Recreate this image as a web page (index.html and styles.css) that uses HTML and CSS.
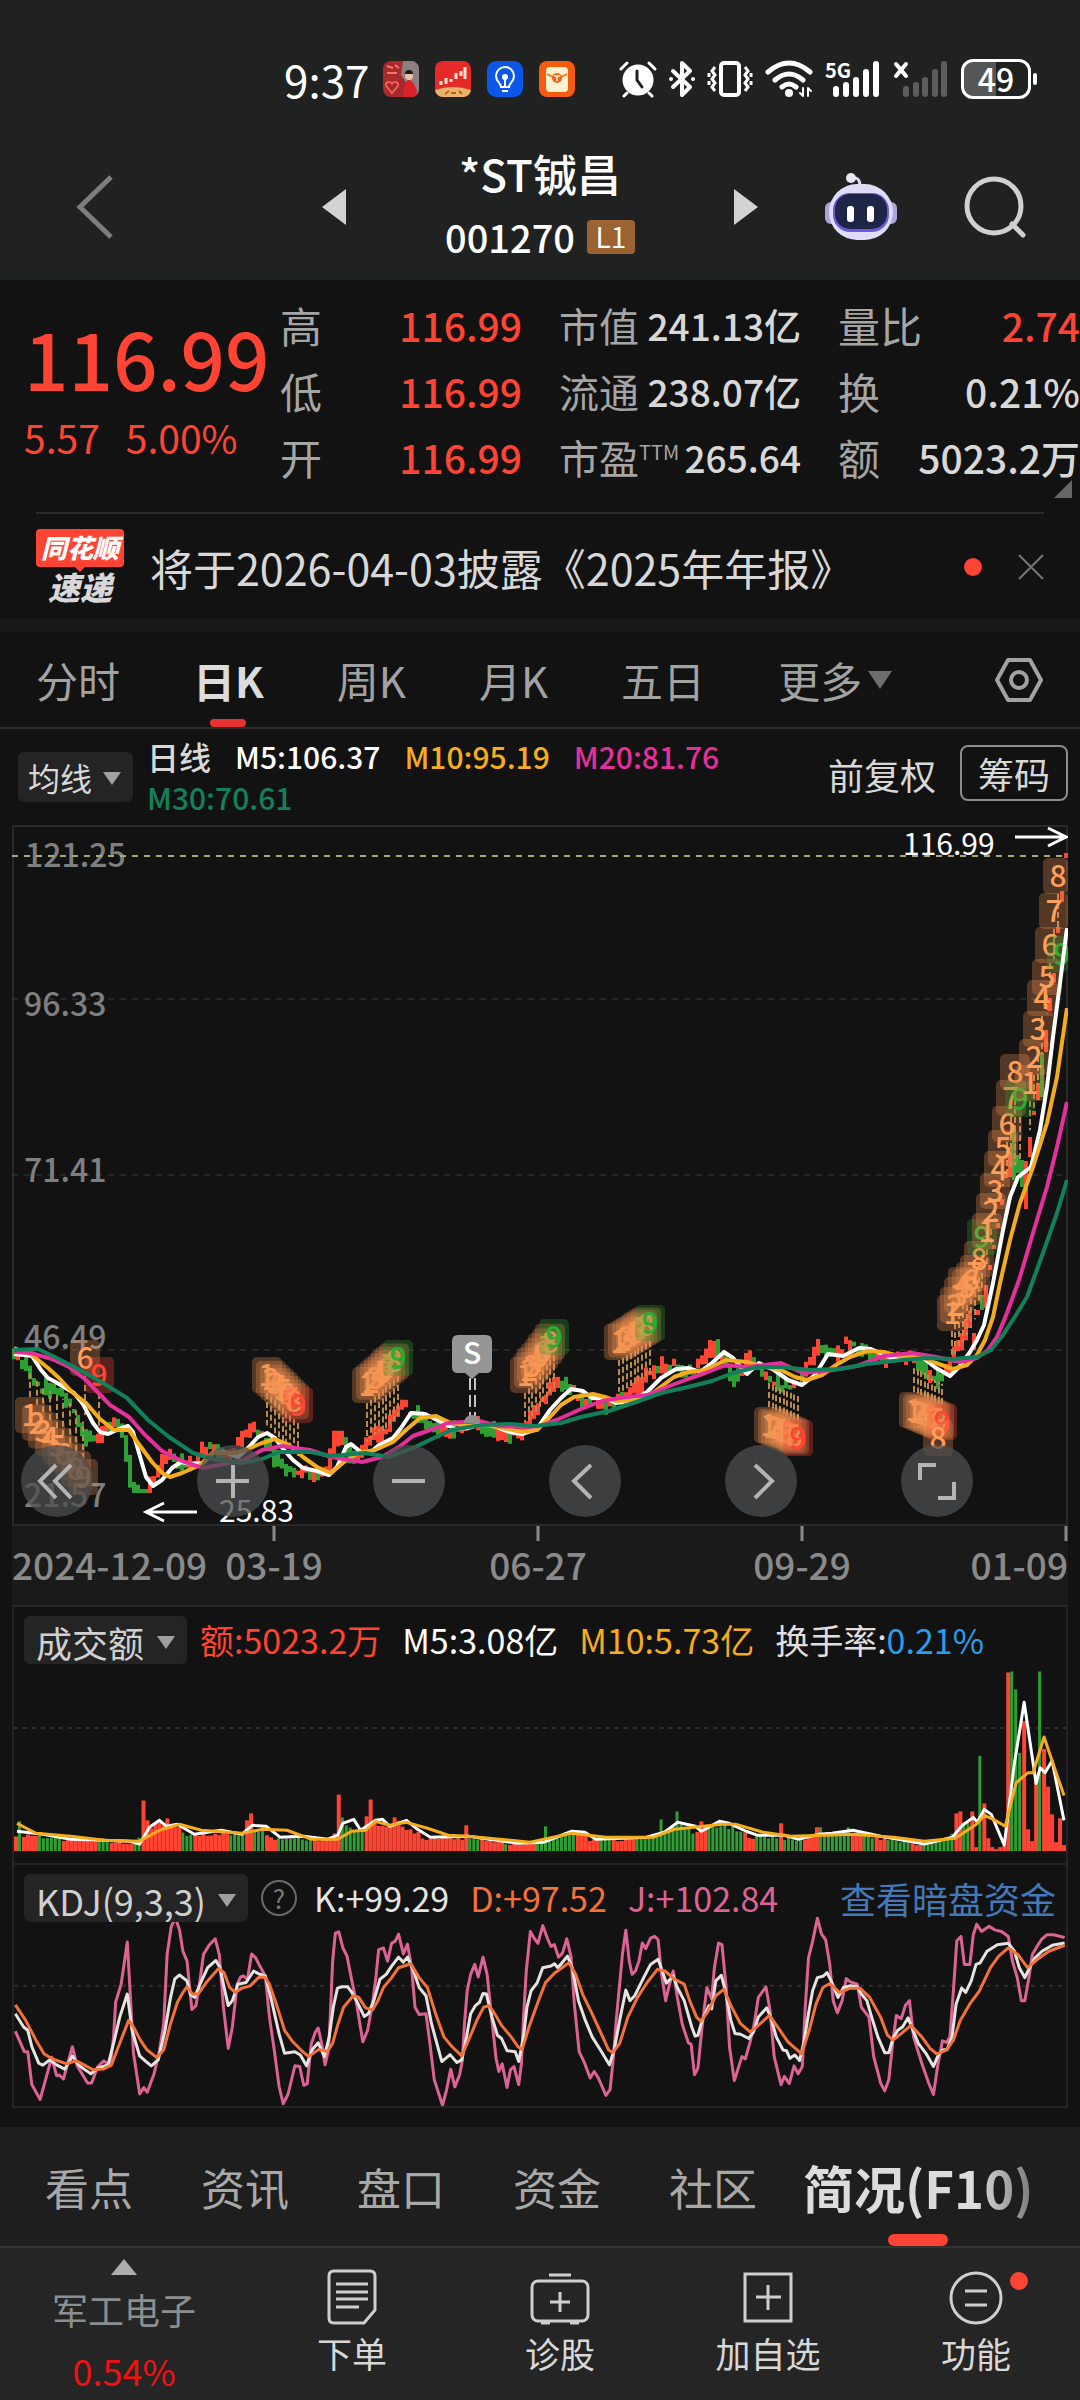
FILE: index.html
```html
<!DOCTYPE html>
<html lang="zh-CN">

<head>
    <meta charset="UTF-8">
    <meta name="viewport" content="width=device-width, initial-scale=1.0">
    <title>*ST铖昌 001270</title>
    <link rel="stylesheet" href="styles.css">
</head>

<body>
    <div class="status-bar">
        <span class="clock">9:37</span>
        <div class="app-icons">
            <svg width="36" height="36" viewBox="0 0 36 36">
                <rect width="36" height="36" rx="8" fill="#a8282c" />
                <path d="M20 0h8a8 8 0 0 1 8 8v20a8 8 0 0 1-4 7L18 14z" fill="#8d7f80" />
                <path d="M4 5l6 2M12 4l4 3M4 12h10" stroke="#f07a6a" stroke-width="2" />
                <path d="M9 32l-6-7c-1-4 4-6 6-2 2-4 7-2 6 2z" fill="none" stroke="#ff6a60" stroke-width="1.5" />
                <circle cx="26" cy="15" r="4" fill="#e9c2ae" />
                <path d="M22 13a4 4 0 0 1 8 0z" fill="#191919" />
                <path d="M20 36c0-10 3-17 6-17s8 7 8 14l-3 3z" fill="#d92128" />
            </svg>
            <svg width="36" height="36" viewBox="0 0 36 36">
                <rect width="36" height="36" rx="8" fill="#e62a27" />
                <path d="M0 29q18-6 36 0a8 8 0 0 1-8 7H8a8 8 0 0 1-8-7z" fill="#e9b469" />
                <path d="M6 20v4M11 17v6M16 18v3M21 12v6M26 10v5M30 6v12" stroke="#ffe3cf" stroke-width="3" />
                <path d="M10 33l4-3M16 32h5M24 30l3 3" stroke="#b95f1e" stroke-width="2" />
            </svg>
            <svg width="36" height="36" viewBox="0 0 36 36" fill="none" stroke="#fff" stroke-width="2">
                <rect width="36" height="36" rx="9" fill="#0d57e8" stroke="none" />
                <path d="M14 26c0-4-5-5-5-11a9 9 0 0 1 18 0c0 6-5 7-5 11z" />
                <path d="M15 30h6M18 26v-8" />
                <circle cx="18" cy="16" r="2" fill="#fff" />
            </svg>
            <svg width="36" height="36" viewBox="0 0 36 36">
                <rect width="36" height="36" rx="8" fill="#f55c0f" />
                <rect x="7" y="6" width="22" height="25" rx="4" fill="#fff0cf" />
                <path d="M8 13q10 7 20 0" fill="none" stroke="#f07a25" stroke-width="2" />
                <circle cx="18" cy="17" r="5" fill="#f0641a" />
                <path d="M15 15h6M18 15v5" stroke="#fff0cf" stroke-width="1.5" />
            </svg>
        </div>
        <div class="system-icons">
            <svg width="38" height="38" viewBox="0 0 38 38" fill="none" stroke="#fff" stroke-width="3" stroke-linecap="round">
                <circle cx="19" cy="20" r="14" fill="#fff" />
                <path d="M2 9l6-6M36 9l-6-6M8 33l-3 3M30 33l3 3" />
                <path d="M18 11v9l5 7" stroke="#1f2221" />
            </svg>
            <svg width="26" height="38" viewBox="0 0 26 38" fill="none" stroke="#fff" stroke-width="4" stroke-linejoin="round">
                <path d="M4 11l17 16-8 8V3l8 8L4 27" stroke-linecap="round" />
                <circle cx="2" cy="19" r="2" fill="#fff" stroke="none" />
                <circle cx="24" cy="19" r="2" fill="#fff" stroke="none" />
            </svg>
            <svg width="46" height="38" viewBox="0 0 46 38" fill="none" stroke="#fff" stroke-width="3">
                <rect x="14" y="3" width="18" height="32" rx="3" stroke-width="4" />
                <path d="M8 7l-3 4 3 4-3 4 3 4-3 4 3 4M38 7l3 4-3 4 3 4-3 4 3 4-3 4M2 13v4M2 21v4M44 13v4M44 21v4" />
            </svg>
            <svg width="48" height="38" viewBox="0 0 48 38" fill="none" stroke="#fff" stroke-width="5" stroke-linecap="round">
                <path d="M3 12q21-18 42 0M10 20q14-12 28 0M17 27q7-6 14 0" />
                <circle cx="24" cy="33" r="4" fill="#fff" stroke="none" />
                <path d="M38 28v8M43 28v8M35 33l3 3M46 31l-3-3" stroke-width="2" />
            </svg>
            <svg class="signal" width="56" height="38" viewBox="0 0 56 38">
                <text x="0" y="18">5G</text>
                <path d="M11 29v5M21 25v9M31 20v14M41 12v22M51 4v30" stroke="#fff" stroke-width="6" stroke-linecap="round" />
            </svg>
            <svg width="56" height="38" viewBox="0 0 56 38" stroke-linecap="round">
                <path d="M3 4l10 12M13 4L3 16" stroke="#fff" stroke-width="4" />
                <path d="M13 29v5M23 25v9M32 20v14M42 12v22M51 4v30" stroke="#5c5e5e" stroke-width="6" />
            </svg>
            <span class="battery">49</span>
        </div>
    </div>

    <header class="top-bar">
        <button class="icon-btn back" aria-label="返回">
            <svg width="40" height="66" viewBox="0 0 40 66" fill="none" stroke="#7c7e7e" stroke-width="5">
                <path d="M36 3L5 33l31 30" />
            </svg>
        </button>
        <div class="stock-switch">
            <button class="icon-btn" aria-label="上一只">
                <svg width="24" height="36" viewBox="0 0 24 36"><path d="M24 0v36L0 18z" fill="#d2d4d3" /></svg>
            </button>
            <div class="stock-title">
                <h1>*ST铖昌</h1>
                <p>001270 <span class="level">L1</span></p>
            </div>
            <button class="icon-btn" aria-label="下一只">
                <svg width="24" height="36" viewBox="0 0 24 36"><path d="M0 0v36l24-18z" fill="#d2d4d3" /></svg>
            </button>
        </div>
        <div class="top-actions">
            <button class="icon-btn" aria-label="智能助手">
                <svg width="74" height="68" viewBox="0 0 74 68">
                    <path d="M27 5q9-2 9 8" fill="none" stroke="#dcdcf0" stroke-width="3" />
                    <circle cx="27" cy="5" r="5" fill="#e8e8f4" />
                    <rect x="1" y="29" width="12" height="22" rx="6" fill="#aaa6dc" />
                    <rect x="61" y="29" width="12" height="22" rx="6" fill="#aaa6dc" />
                    <rect x="5" y="11" width="64" height="56" rx="28" fill="#dedcf7" />
                    <rect x="9" y="20" width="56" height="39" rx="17" fill="#6a5bd8" />
                    <rect x="11" y="21" width="52" height="35" rx="15" fill="#1f2547" />
                    <rect x="23" y="33" width="7" height="16" rx="3" fill="#fff" />
                    <rect x="43" y="33" width="7" height="16" rx="3" fill="#fff" />
                </svg>
            </button>
            <button class="icon-btn" aria-label="搜索">
                <svg width="62" height="62" viewBox="0 0 62 62" fill="none" stroke="#cfd1d0" stroke-width="5">
                    <circle cx="30" cy="30" r="27" />
                    <path d="M48 48l11 11" stroke-linecap="round" />
                </svg>
            </button>
        </div>
    </header>

    <main>
        <section class="quote">
            <div class="price-block">
                <p class="price">116.99</p>
                <p class="change"><span>5.57</span><span>5.00%</span></p>
            </div>
            <dl class="stats wide">
                <div><dt>高</dt><dd class="up">116.99</dd></div>
                <div><dt>低</dt><dd class="up">116.99</dd></div>
                <div><dt>开</dt><dd class="up">116.99</dd></div>
            </dl>
            <dl class="stats">
                <div><dt>市值</dt><dd>241.13亿</dd></div>
                <div><dt>流通</dt><dd>238.07亿</dd></div>
                <div><dt>市盈<sup>TTM</sup></dt><dd>265.64</dd></div>
            </dl>
            <dl class="stats wide">
                <div><dt>量比</dt><dd class="up">2.74</dd></div>
                <div><dt>换</dt><dd>0.21%</dd></div>
                <div><dt>额</dt><dd>5023.2万</dd></div>
            </dl>
        </section>

        <section class="news">
            <div class="news-logo"><span class="brand">同花顺</span><span class="sub">速递</span></div>
            <a href="#">将于2026-04-03披露《2025年年报》</a>
            <span class="dot"></span>
            <button class="icon-btn" aria-label="关闭">
                <svg width="26" height="26" viewBox="0 0 26 26" stroke="#777" stroke-width="2"><path d="M1 1l24 24M25 1L1 25" /></svg>
            </button>
        </section>

        <nav class="period-tabs">
            <button>分时</button>
            <button class="active">日K</button>
            <button>周K</button>
            <button>月K</button>
            <button>五日</button>
            <button class="more">更多</button>
            <button class="settings" aria-label="设置">
                <svg width="50" height="46" viewBox="0 0 50 46" fill="none" stroke="#a2a2a2" stroke-width="4" stroke-linejoin="round">
                    <path d="M14 3h22l11 20-11 20H14L3 23z" />
                    <circle cx="25" cy="23" r="8" />
                </svg>
            </button>
        </nav>

        <div class="ma-bar">
            <label class="picker">
                <select aria-label="主图指标"><option>均线</option></select>
            </label>
            <p class="ma-legend">
                <span class="label">日线</span>
                <span>M5:106.37</span>
                <span class="m10">M10:95.19</span>
                <span class="m20">M20:81.76</span>
                <span class="m30">M30:70.61</span>
            </p>
            <button class="adjust">前复权</button>
            <button class="chips">筹码</button>
        </div>

        <section class="price-chart">
            <svg id="priceChart" viewBox="0 0 1056 780">
                <rect x="0" y="700" width="1056" height="80" fill="#1b1a1a" />
                <g fill="none" stroke="#292929" stroke-width="2">
                    <path d="M1 700V1H1055V700" />
                    <path d="M0 700H1056" />
                    <path d="M0 174H1056M0 350H1056M0 525H1056" stroke-dasharray="6 6" stroke-width="1" stroke="#3a3a3a" />
                </g>
                <g class="y-labels">
                    <text x="13" y="42">121.25</text>
                    <text x="12" y="191">96.33</text>
                    <text x="12" y="357">71.41</text>
                    <text x="12" y="524">46.49</text>
                    <text x="12" y="682">21.57</text>
                </g>
                <path d="M0 31H1056" stroke="#a9a877" stroke-width="2" stroke-dasharray="6 6" />
                <g id="candles"></g>
                <g id="tails" stroke="#b98a50" stroke-width="2" stroke-dasharray="6 3"></g>
                <g id="markers" class="markers"></g>
                <g id="maLines" fill="none" stroke-width="4" stroke-linejoin="round"></g>
                <g class="sell-mark">
                    <path d="M458 553V592M463 553V592" stroke="#c4c4c4" stroke-width="2" stroke-dasharray="12 5" />
                    <path d="M452 598a8 8 0 0 1 16 0z" fill="#8d8d8d" />
                    <path d="M446 510h28q6 0 6 6v26q0 6-6 6h-7l-7 6-7-6h-7q-6 0-6-6v-26q0-6 6-6z" fill="#969696" />
                    <text x="460" y="539">S</text>
                </g>
                <g class="extremes">
                    <text x="891" y="30">116.99</text>
                    <path d="M1003 12h50M1036 3l18 9-18 9" />
                    <text x="207" y="697">25.83</text>
                    <path d="M185 687h-50M152 678l-18 9 18 9" />
                </g>
                <path d="M262 701v15M526 701v15M790 701v15M1054 701v15" stroke="#8a8a8a" stroke-width="3" />
                <g class="x-labels">
                    <text x="0" y="755">2024-12-09</text>
                    <text x="262" y="755" text-anchor="middle">03-19</text>
                    <text x="526" y="755" text-anchor="middle">06-27</text>
                    <text x="790" y="755" text-anchor="middle">09-29</text>
                    <text x="1056" y="755" text-anchor="end">01-09</text>
                </g>
            </svg>
            <div class="chart-tools">
                <button aria-label="最早"><svg viewBox="0 0 72 72"><path d="M35 20L19 36l16 17M50 20L34 36l16 17" /></svg></button>
                <button aria-label="放大"><svg viewBox="0 0 72 72"><path d="M36 20v33M19 36h33" /></svg></button>
                <button aria-label="缩小"><svg viewBox="0 0 72 72"><path d="M19 36h33" /></svg></button>
                <button aria-label="左移"><svg viewBox="0 0 72 72"><path d="M42 20L25 36l17 17" /></svg></button>
                <button aria-label="右移"><svg viewBox="0 0 72 72"><path d="M30 20l17 16-17 17" /></svg></button>
                <button aria-label="全屏"><svg viewBox="0 0 72 72"><path d="M19 35V20h16M37 53h16V37" /></svg></button>
            </div>
        </section>

        <section class="panel volume">
            <svg id="volumeChart" viewBox="0 0 1056 258" preserveAspectRatio="none">
                <path d="M0 122H1056" stroke="#303030" stroke-width="2" stroke-dasharray="4 5" />
                <g id="volumeBars"></g>
                <g id="volumeLines" fill="none" stroke-width="3" stroke-linejoin="round"></g>
            </svg>
            <div class="panel-head">
                <label class="picker">
                    <select aria-label="成交指标"><option>成交额</option></select>
                </label>
                <span class="up">额:5023.2万</span>
                <span>M5:3.08亿</span>
                <span class="m10">M10:5.73亿</span>
                <span class="turnover">换手率:<b>0.21%</b></span>
            </div>
        </section>

        <section class="panel kdj">
            <svg id="kdjChart" viewBox="18 38 1532 732" preserveAspectRatio="none">
                <path d="M18 405H1550" stroke="#2c2c2c" stroke-width="2" stroke-dasharray="4 5" vector-effect="non-scaling-stroke" />
            </svg>
            <div class="panel-head">
                <label class="picker">
                    <select aria-label="副图指标"><option>KDJ(9,3,3)</option></select>
                </label>
                <button class="help" aria-label="指标说明">?</button>
                <span class="k">K:+99.29</span>
                <span class="d">D:+97.52</span>
                <span class="j">J:+102.84</span>
                <a href="#">查看暗盘资金</a>
            </div>
        </section>
    </main>

    <nav class="section-tabs">
        <a href="#">看点</a>
        <a href="#">资讯</a>
        <a href="#">盘口</a>
        <a href="#">资金</a>
        <a href="#">社区</a>
        <a href="#" class="active"><span>简况(F10)</span></a>
    </nav>

    <footer class="bottom-bar">
        <button class="sector">
            <svg width="26" height="16" viewBox="0 0 26 16"><path d="M13 0l13 16H0z" fill="#adadad" /></svg>
            <span class="name">军工电子</span>
            <span class="rate">0.54%</span>
        </button>
        <button>
            <svg width="56" height="56" viewBox="0 0 56 56">
                <path d="M10 2h36q5 0 5 5v34L40 54H10q-5 0-5-5V7q0-5 5-5zM12 15h32M12 23h32M12 30h32M12 38h23" />
            </svg>
            下单
        </button>
        <button>
            <svg width="60" height="56" viewBox="0 0 60 56">
                <rect x="2" y="12" width="56" height="40" rx="6" />
                <path d="M19 6h22M30 23v20M20 33h20M11 54h9M40 54h9" />
            </svg>
            诊股
        </button>
        <button>
            <svg width="56" height="56" viewBox="0 0 56 56">
                <rect x="5" y="5" width="46" height="47" />
                <path d="M28 16v25M16 28h25" />
            </svg>
            加自选
        </button>
        <button>
            <svg width="56" height="56" viewBox="0 0 56 56">
                <circle cx="28" cy="29" r="25" />
                <path d="M17 22h22M17 36h22" />
            </svg>
            功能
            <span class="dot"></span>
        </button>
    </footer>

    <script src="charts.js"></script>
</body>

</html>
```

FILE: styles.css
```css
* {
    box-sizing: border-box;
}

body {
    margin: 0;
    background: #121212;
    color: #d8d8d8;
    font-family: "Noto Sans CJK SC", "Noto Sans", sans-serif;
    overflow-x: hidden;
}

h1,
p,
dl,
dd {
    margin: 0;
}

button,
select {
    font-family: inherit;
    color: inherit;
    background: none;
    border: none;
    padding: 0;
    cursor: pointer;
}

a {
    color: inherit;
    text-decoration: none;
}

svg {
    display: block;
    flex-shrink: 0;
}

.up {
    color: #ff4433;
}

.m10 {
    color: #f5ad1d;
}

.m20 {
    color: #e3309b;
}

.m30 {
    color: #12805a;
}

.dot {
    width: 18px;
    height: 18px;
    border-radius: 50%;
    background: #ff4433;
}

.icon-btn {
    display: flex;
}

/* status bar */
.status-bar {
    display: flex;
    align-items: center;
    height: 104px;
    padding: 54px 49px 0 284px;
    background: #1f2221;
    color: #fff;
}

.clock {
    font-size: 44px;
    line-height: 44px;
}

.app-icons {
    display: flex;
    gap: 16px;
    margin-left: 13px;
}

.system-icons {
    display: flex;
    align-items: center;
    gap: 12px;
    margin-left: auto;
}

.signal text {
    font-size: 20px;
    font-weight: bold;
    fill: #fff;
}

.battery {
    position: relative;
    width: 70px;
    height: 40px;
    border: 3px solid #fff;
    border-radius: 12px;
    background: linear-gradient(to right, #555757 50%, #1f2221 50%);
    font-size: 32px;
    font-weight: 500;
    line-height: 32px;
    text-align: center;
}

.battery::after {
    content: "";
    position: absolute;
    right: -9px;
    top: 11px;
    width: 4px;
    height: 12px;
    border-radius: 2px;
    background: #fff;
}

/* title bar */
.top-bar {
    display: grid;
    grid-template-columns: 1fr 436px 1fr;
    align-items: center;
    height: 176px;
    padding: 30px 0 0;
    background: #1f2221;
}

.back {
    margin-left: 75px;
}

.stock-switch {
    display: flex;
    justify-content: space-between;
    align-items: center;
}

.stock-title {
    color: #fff;
    text-align: center;
}

.stock-title h1 {
    font-size: 44px;
    font-weight: 500;
    line-height: 60px;
}

.stock-title p {
    display: flex;
    align-items: center;
    gap: 12px;
    font-size: 38px;
    font-weight: 500;
    line-height: 68px;
}

.level {
    width: 48px;
    height: 34px;
    border-radius: 4px;
    background: #9c6332;
    font-size: 28px;
    font-weight: normal;
    line-height: 32px;
}

.top-actions {
    display: flex;
    justify-content: flex-end;
    align-items: center;
    gap: 66px;
    padding-right: 54px;
}

/* quote */
.quote {
    position: relative;
    display: grid;
    grid-template-columns: 243px 1fr 1fr 1fr;
    gap: 37px;
    padding: 12px 0 22px;
}

.quote::after {
    content: "";
    position: absolute;
    right: 8px;
    bottom: 14px;
    border-left: 18px solid transparent;
    border-bottom: 18px solid #666;
}

.price-block {
    padding: 22px 0 0 24px;
    color: #ff4433;
}

.price {
    font-size: 78px;
    font-weight: 500;
    line-height: 86px;
}

.change {
    display: flex;
    gap: 26px;
    font-size: 39px;
    line-height: 74px;
}

.stats div {
    display: flex;
    justify-content: space-between;
    height: 66px;
    line-height: 66px;
    white-space: nowrap;
}

.stats dt {
    color: #a5a5a5;
    font-size: 40px;
}

.stats dd {
    font-size: 37px;
    font-weight: 500;
}

.stats.wide dt {
    font-size: 42px;
}

.stats.wide dd {
    font-size: 39px;
}

.stats sup {
    font-size: 20px;
    line-height: 0;
    vertical-align: 14px;
}

/* news */
.news {
    display: flex;
    align-items: center;
    height: 107px;
    margin: 0 36px;
    border-top: 2px solid #2b2b2b;
}

.news a {
    margin-left: 26px;
    font-size: 43px;
    line-height: 56px;
    white-space: nowrap;
}

.news .dot {
    margin-left: auto;
    margin-right: 36px;
}

.news-logo {
    width: 88px;
    font-style: italic;
    font-weight: 900;
    text-align: center;
}

.news-logo span {
    display: block;
}

.brand {
    position: relative;
    height: 38px;
    border-radius: 4px;
    background: #ff4433;
    color: #fff;
    font-size: 26px;
    line-height: 36px;
}

.brand::after {
    content: "";
    position: absolute;
    left: 38px;
    top: 37px;
    border: 6px solid transparent;
    border-top-color: #ff4433;
}

.sub {
    font-size: 32px;
    line-height: 38px;
}

/* period tabs */
.period-tabs {
    display: flex;
    align-items: center;
    gap: 73px;
    height: 110px;
    padding: 0 36px;
    border-top: 13px solid #181818;
    border-bottom: 2px solid #2c2c2c;
    color: #a2a2a2;
}

.period-tabs button {
    position: relative;
    height: 94px;
    font-size: 42px;
    line-height: 90px;
    white-space: nowrap;
}

.period-tabs .active {
    color: #dcdcdc;
    font-weight: bold;
}

.period-tabs .active::after {
    content: "";
    position: absolute;
    left: 50%;
    bottom: 0;
    width: 36px;
    height: 8px;
    margin-left: -18px;
    border-radius: 4px;
    background: #e83232;
}

.period-tabs .more {
    display: flex;
    align-items: center;
    gap: 6px;
}

.more::after {
    content: "";
    border: 12px solid transparent;
    border-top: 18px solid #6e6e6e;
    border-bottom: none;
}

.period-tabs .settings {
    display: flex;
    align-items: center;
    margin-left: auto;
}

/* moving average legend */
.picker {
    position: relative;
    display: flex;
    border-radius: 6px;
    background: #242424;
}

.picker select {
    appearance: none;
    height: 50px;
    padding: 0 40px 0 10px;
    font-size: 32px;
}

.picker::after {
    content: "";
    position: absolute;
    right: 12px;
    top: 20px;
    border: 9px solid transparent;
    border-top: 13px solid #a0a0a0;
    border-bottom: none;
    pointer-events: none;
}

.ma-bar {
    display: flex;
    align-items: center;
    height: 96px;
    padding: 0 12px 0 18px;
}

.ma-legend {
    display: flex;
    flex-wrap: wrap;
    flex: 1;
    column-gap: 24px;
    margin-left: 14px;
    color: #fff;
    font-size: 30px;
    font-weight: 500;
    line-height: 41px;
}

.ma-legend .label {
    color: #d8d8d8;
    font-size: 32px;
}

.adjust {
    margin-right: 24px;
    margin-bottom: 6px;
    font-size: 36px;
}

.chips {
    width: 108px;
    height: 56px;
    margin-bottom: 8px;
    border: 2px solid #8c8c8c;
    border-radius: 8px;
    font-size: 36px;
    line-height: 48px;
}

/* charts */
.price-chart {
    position: relative;
    margin: 0 12px;
}

.price-chart > svg,
.panel > svg {
    width: 100%;
}

.y-labels {
    fill: #7f7f7f;
    font-size: 32px;
    font-weight: 500;
}

.x-labels {
    fill: #8a8a8a;
    font-size: 37px;
    font-weight: 500;
}

.markers text,
.sell-mark text {
    font-size: 30px;
    font-weight: 500;
    text-anchor: middle;
}

.sell-mark text {
    fill: #fff;
}

.extremes {
    fill: #fff;
    font-size: 30px;
}

.extremes path {
    fill: none;
    stroke: #fff;
    stroke-width: 3;
}

.chart-tools {
    position: absolute;
    left: 9px;
    right: 95px;
    bottom: 88px;
    display: flex;
    justify-content: space-between;
}

.chart-tools button {
    width: 72px;
    height: 72px;
    border-radius: 50%;
    background: rgba(76, 77, 79, 0.75);
}

.chart-tools svg {
    fill: none;
    stroke: #b4b4b4;
    stroke-width: 4;
}

.panel {
    display: grid;
    margin: 0 12px;
    border: 2px solid #242424;
    border-bottom: none;
}

.panel > svg,
.panel-head {
    grid-area: 1 / 1;
    min-width: 0;
}

.volume > svg {
    height: 256px;
}

.kdj {
    margin-bottom: 19px;
    border-bottom: 2px solid #242424;
}

.kdj > svg {
    height: 241px;
}

.kdj polyline {
    fill: none;
    stroke-width: 3;
    stroke-linejoin: round;
    vector-effect: non-scaling-stroke;
}

.panel-head {
    position: relative;
    display: flex;
    align-items: center;
    align-self: start;
    gap: 21px;
    padding: 9px 10px;
    color: #fff;
    font-size: 34px;
    line-height: 48px;
    white-space: nowrap;
}

.panel-head .picker {
    margin-right: -8px;
    color: #d0d0d0;
}

.panel-head .picker select {
    height: 48px;
    padding: 0 42px 0 12px;
    font-size: 36px;
}

.turnover {
    color: #e2dede;
}

.turnover b {
    color: #2b9cea;
    font-weight: normal;
}

.help {
    width: 36px;
    height: 36px;
    margin-right: -4px;
    border: 2px solid #6a6a6a;
    border-radius: 50%;
    color: #7a7a7a;
    font-size: 26px;
    line-height: 30px;
}

.k {
    color: #e6e4e0;
}

.d {
    color: #f4713a;
}

.j {
    color: #dc6393;
}

.panel-head a {
    margin-left: auto;
    color: #4478b8;
    font-size: 36px;
}

/* section tabs */
.section-tabs {
    display: flex;
    align-items: center;
    gap: 68px;
    height: 121px;
    padding: 0 45px;
    background: #1e1e1e;
    border-bottom: 2px solid #333;
    color: #a8a8a8;
    font-size: 44px;
    line-height: 118px;
    white-space: nowrap;
}

.section-tabs .active {
    position: relative;
    margin-left: -22px;
    font-size: 51px;
    font-weight: bold;
}

.section-tabs .active span {
    background: linear-gradient(to right, #dcdcdc 75%, #777);
    background-clip: text;
    color: transparent;
}

.section-tabs .active::after {
    content: "";
    position: absolute;
    left: 50%;
    bottom: 0;
    width: 60px;
    height: 12px;
    margin-left: -30px;
    border-radius: 6px;
    background: #ff4433;
}

/* bottom bar */
.bottom-bar {
    display: grid;
    grid-template-columns: 248px 1fr 1fr 1fr 1fr;
    min-height: 152px;
    background: #252525;
}

.bottom-bar button {
    position: relative;
    display: flex;
    flex-direction: column;
    align-items: center;
    padding-top: 21px;
    font-size: 35px;
    line-height: 56px;
}

.bottom-bar button > svg {
    fill: none;
    stroke: #cfcfcf;
    stroke-width: 3;
}

.bottom-bar .sector {
    padding-top: 11px;
    font-size: 36px;
}

.bottom-bar .sector > svg {
    stroke: none;
}

.sector .name {
    color: #8b8f8f;
    line-height: 68px;
}

.sector .rate {
    color: #f01212;
    line-height: 54px;
}

.bottom-bar .dot {
    position: absolute;
    left: 50%;
    top: 24px;
    margin-left: 34px;
}
```

FILE: charts.js
```js
const SVG_NS = "http://www.w3.org/2000/svg";
const RED = "#ff4433";
const GREEN = "#2f9e33";
const STEP = 4;

const ma = {
    m30: "2,525 26,524 43,532 64,543 91,558 115,573 136,595 157,612 181,628 201,634 229,638 250,634 267,627 298,627 319,631 353,628 377,632 401,623 422,613 439,605 470,600 498,599 522,601 549,598 569,592 597,586 624,577 649,568 676,562 700,556 721,548 745,542 769,542 797,545 828,544 855,539 890,535 914,533 941,534 965,532 979,525 991,510 1004,490 1015,472 1031,428 1045,388 1055,355",
    m20: "2,527 19,528 40,534 57,542 74,555 98,580 117,592 133,610 150,626 170,636 191,643 212,639 232,635 250,625 270,621 298,625 319,632 350,637 370,632 387,622 401,611 418,605 436,598 467,596 487,601 515,602 528,601 549,593 569,584 590,576 614,572 635,570 655,562 676,554 693,548 714,540 735,542 769,538 791,548 821,545 845,541 872,531 900,528 924,532 948,537 965,533 976,525 985,512 995,488 1008,452 1021,408 1035,362 1045,322 1055,277",
    m10: "2,523 20,530 36,543 47,553 60,567 74,578 88,594 102,605 117,605 126,618 140,637 150,648 158,652 170,648 188,640 201,628 222,628 236,624 250,618 263,614 277,620 291,632 305,642 319,648 332,637 346,628 363,625 381,617 394,605 408,593 424,591 439,598 456,601 474,600 491,603 510,607 525,605 538,592 549,580 562,572 581,569 593,572 604,576 626,575 642,567 662,552 676,547 693,545 714,535 735,537 748,541 769,545 783,552 795,555 810,550 824,540 838,532 855,526 872,527 890,532 910,532 924,538 941,544 955,540 965,530 973,515 981,492 988,458 998,415 1008,378 1021,342 1035,298 1045,252 1055,183",
    m5: "2,529 12,530 20,531 29,545 36,553 47,559 62,568 71,579 81,598 88,607 96,609 107,604 116,601 121,607 127,628 134,652 141,661 150,655 160,643 169,637 179,639 191,638 201,628 212,627 226,632 236,623 246,612 255,608 263,613 272,625 281,635 291,643 305,646 317,650 325,642 334,622 339,619 350,628 358,628 367,620 381,613 389,603 399,588 413,589 429,597 443,604 456,603 474,598 484,602 498,607 510,609 525,604 538,585 549,573 559,564 571,566 580,573 593,573 604,578 621,575 635,567 649,553 664,544 676,543 688,547 700,538 712,527 721,533 735,549 747,538 762,545 776,555 790,560 803,550 816,529 831,531 847,523 859,524 879,533 893,532 910,532 924,543 938,551 948,541 958,527 965,515 972,500 981,458 991,405 998,372 1006,352 1019,342 1028,305 1035,262 1041,212 1048,158 1055,103"
};

const maColors = { m5: "#ffffff", m10: "#f5ad1d", m20: "#e3309b", m30: "#12805a" };

// x, top, bottom, rising
const lastCandles = [
    [962, 508, 525, 1], [966, 485, 490, 1], [970, 470, 485, 0], [974, 460, 483, 1],
    [978, 440, 445, 1], [982, 420, 424, 1], [986, 398, 403, 1], [990, 374, 380, 1],
    [994, 348, 353, 1], [998, 322, 352, 1], [1002, 300, 355, 0], [1006, 330, 348, 0],
    [1010, 335, 362, 0], [1014, 336, 384, 1], [1018, 312, 332, 1], [1022, 286, 290, 1],
    [1026, 258, 275, 1], [1030, 228, 272, 0], [1034, 205, 227, 1], [1038, 173, 186, 1],
    [1042, 148, 157, 1], [1046, 102, 108, 1], [1050, 66, 77, 1], [1054, 28, 33, 1]
];

// nine-turn runs: first marker, ninth marker, colour of the ninth, side of the candles it sits on
const runs = [
    [18, 590, 71, 652, "orange", "below"],
    [255, 550, 286, 580, "red", "above"],
    [355, 560, 386, 533, "green", "above"],
    [513, 550, 542, 512, "green", "above"],
    [607, 517, 638, 498, "green", "above"],
    [757, 600, 786, 613, "red", "below"],
    [902, 585, 930, 597, "red", "below"]
];

const singles = [
    [6, 73, 533, "orange"], [9, 87, 550, "red"], [8, 926, 613, "orange"],
    [1, 940, 488, "orange"], [2, 943, 480, "orange"], [3, 947, 470, "orange"], [4, 951, 460, "orange"],
    [5, 955, 462, "orange"], [6, 959, 455, "orange"], [7, 963, 448, "orange"], [8, 967, 434, "orange"],
    [9, 970, 412, "green"], [1, 975, 406, "orange"], [2, 979, 386, "orange"], [3, 983, 366, "orange"],
    [4, 987, 344, "orange"], [5, 991, 323, "orange"], [6, 995, 299, "orange"], [7, 999, 273, "orange"],
    [8, 1003, 247, "orange"], [9, 1008, 274, "green"], [1, 1018, 258, "orange"], [2, 1022, 232, "orange"],
    [3, 1026, 204, "orange"], [4, 1030, 173, "orange"], [5, 1035, 152, "orange"], [6, 1038, 120, "orange"],
    [7, 1042, 86, "orange"], [8, 1046, 51, "orange"], [9, 1050, 129, "green"]
];

const markerColors = {
    orange: ["#f09050", "#ff9f5a"],
    red: ["#ff4a38", "#ff4433"],
    green: ["#2f9e33", "#25b030"]
};

// x, bar height
const volumeM5 = "3,20 29,17 57,12 91,11 115,10 126,7 136,24 146,31 153,25 164,27 181,17 208,21 229,17 239,26 253,25 267,14 291,15 315,12 325,16 330,28 341,32 348,21 363,31 370,32 377,25 394,31 405,22 418,14 456,15 505,8 532,9 560,20 573,19 584,12 635,14 653,19 666,29 684,25 690,20 708,30 718,28 735,20 746,16 773,16 787,12 808,17 821,18 842,21 870,15 914,7 942,14 952,26 963,34 967,29 974,42 981,37 994,6 1004,87 1014,150 1026,68 1030,84 1035,79 1042,91 1054,31";
const volumeM10 = "3,28 22,18 57,15 91,11 126,10 146,21 166,27 188,21 229,18 250,22 274,21 298,12 325,12 339,20 353,21 363,30 377,26 394,29 415,23 436,16 456,15 518,9 560,18 594,14 642,14 663,22 711,27 725,27 752,19 780,15 814,16 842,17 883,14 914,10 945,13 966,27 974,36 983,32 995,25 1006,69 1018,79 1023,79 1034,115 1042,91 1054,56";

const volumePeaks = {
    6: [30, 0], 130: [51, 1], 134: [31, 1], 154: [33, 1], 234: [31, 1], 238: [38, 1], 326: [57, 1], 330: [34, 0],
    354: [35, 1], 358: [52, 1], 382: [34, 1], 454: [26, 1], 534: [25, 0], 650: [32, 0], 666: [40, 0], 690: [30, 1],
    770: [28, 1], 806: [24, 1], 810: [24, 0], 838: [24, 0], 946: [38, 1], 950: [40, 1], 962: [40, 1],
    966: [4, 1], 970: [96, 0], 974: [48, 1], 978: [13, 1], 982: [4, 1], 986: [2, 1], 990: [4, 1],
    994: [5, 1], 998: [180, 1], 1002: [181, 0], 1006: [163, 0], 1010: [99, 0], 1014: [131, 1],
    1018: [22, 1], 1022: [10, 1], 1026: [72, 1], 1030: [181, 0], 1034: [103, 1], 1038: [65, 1],
    1042: [37, 1], 1046: [9, 1], 1050: [33, 1], 1054: [6, 1]
};

const kdj = {
    "#dc6393": "20,543 33,605 38,605 44,705 56,750 66,675 73,622 80,678 84,676 90,688 103,590 110,648 117,672 125,700 131,700 140,650 149,633 158,648 163,560 166,455 174,400 183,272 187,420 192,610 201,733 207,714 212,728 222,672 230,600 236,520 241,310 247,225 253,198 259,235 264,300 270,330 277,477 283,465 288,400 294,310 302,282 311,262 317,310 323,470 330,595 336,530 343,400 348,378 352,375 358,385 364,308 370,320 376,345 384,375 390,500 397,600 404,710 410,763 417,735 427,648 434,650 440,707 445,703 451,580 457,545 461,533 466,580 471,645 476,600 479,480 482,330 486,245 491,241 497,290 503,315 510,390 517,460 526,575 533,540 540,460 545,380 549,295 556,290 562,330 568,275 573,270 578,248 585,308 591,278 597,350 602,470 608,492 618,490 624,585 630,690 642,768 648,720 654,658 660,712 667,675 671,630 674,520 678,420 683,370 689,340 694,378 701,318 707,370 713,490 720,625 724,665 729,642 736,714 741,660 746,650 753,705 757,640 760,500 764,360 770,240 776,262 781,276 788,222 795,262 800,285 805,280 811,318 817,305 823,262 829,315 834,460 841,605 849,640 857,685 863,665 869,685 880,738 886,720 891,620 895,510 900,400 904,310 909,236 914,330 918,370 923,360 928,330 933,275 938,292 945,260 951,255 956,265 961,370 967,450 972,405 978,360 984,440 991,520 1000,578 1004,582 1009,675 1014,655 1020,530 1027,410 1034,445 1038,350 1044,275 1049,280 1055,410 1060,590 1067,693 1078,620 1083,627 1090,575 1096,520 1102,440 1113,408 1119,480 1125,620 1135,705 1140,680 1147,702 1154,648 1160,672 1166,650 1170,480 1175,320 1181,270 1188,200 1194,248 1200,265 1206,340 1211,450 1217,487 1224,450 1230,383 1236,393 1246,400 1252,470 1263,500 1270,620 1280,700 1286,724 1292,690 1298,570 1303,495 1310,505 1316,465 1322,450 1328,560 1340,640 1350,700 1357,735 1363,650 1370,572 1376,577 1381,560 1386,420 1391,268 1397,255 1402,340 1410,340 1415,250 1420,218 1427,240 1438,224 1446,235 1456,240 1466,255 1472,330 1479,380 1485,450 1490,450 1496,380 1501,310 1508,285 1514,265 1522,250 1532,250 1548,258",
    "#e6e4e0": "20,490 32,530 38,540 44,590 54,640 60,646 70,630 80,645 92,658 103,618 112,645 120,658 130,672 140,655 155,645 163,580 172,500 183,430 190,540 201,618 212,638 218,648 228,630 238,540 246,440 252,385 259,372 270,390 275,432 281,440 290,395 300,350 312,328 318,350 324,410 330,465 336,450 344,400 356,395 367,360 376,370 384,375 392,440 404,550 412,610 427,605 435,615 444,648 452,600 461,578 470,620 477,560 483,470 489,412 496,408 504,408 510,425 518,455 528,498 534,490 542,450 551,385 560,370 568,345 578,318 585,333 591,318 600,360 608,410 618,435 626,520 641,635 653,614 663,638 670,630 677,560 683,490 690,465 696,455 701,428 706,430 714,500 722,555 728,565 736,602 748,605 753,635 760,560 765,470 771,420 780,395 788,350 800,345 805,338 810,350 824,315 831,350 840,450 850,510 860,560 872,600 885,645 892,600 900,510 909,418 915,450 922,435 935,380 945,340 956,324 962,360 968,397 978,375 984,410 994,450 1005,530 1010,558 1014,555 1020,510 1030,465 1034,475 1040,390 1048,373 1054,420 1062,510 1068,550 1076,552 1088,565 1095,545 1102,500 1114,472 1120,500 1128,560 1138,600 1143,602 1148,625 1155,615 1162,632 1168,580 1175,490 1181,420 1188,380 1196,376 1202,365 1208,390 1218,440 1226,410 1236,405 1246,408 1252,430 1260,450 1267,500 1276,560 1286,608 1292,608 1298,565 1305,540 1312,530 1320,502 1328,545 1335,580 1346,610 1357,650 1363,620 1370,600 1377,598 1384,560 1390,460 1398,412 1404,425 1412,390 1419,340 1425,335 1435,300 1450,280 1466,276 1475,300 1482,350 1490,380 1497,350 1505,320 1515,300 1530,282 1548,275",
    "#f4713a": "20,463 35,510 50,570 62,612 75,628 95,642 108,632 120,645 133,660 148,658 160,645 170,590 185,510 192,530 202,570 212,600 226,623 236,600 246,520 256,455 264,425 270,408 278,430 286,430 298,395 316,352 324,365 332,410 340,425 350,412 362,405 374,380 383,378 390,400 400,460 412,540 424,575 436,600 447,620 462,598 474,605 482,580 490,520 498,470 512,435 520,440 530,472 540,478 548,450 556,410 568,380 578,350 596,338 608,380 620,410 632,490 644,560 656,590 670,618 680,570 692,510 702,470 710,465 718,490 728,525 742,560 752,590 758,598 768,530 780,460 792,395 806,365 826,335 836,370 846,430 860,490 872,545 884,600 890,608 900,580 912,500 926,440 940,395 955,355 966,360 980,385 994,400 1002,450 1012,500 1018,512 1028,485 1040,435 1052,415 1062,465 1076,520 1090,545 1102,525 1118,495 1130,530 1145,575 1165,612 1176,540 1186,460 1196,410 1206,398 1220,425 1236,412 1250,412 1264,440 1280,500 1290,555 1298,570 1310,550 1324,525 1340,560 1352,595 1362,612 1376,600 1386,570 1396,510 1410,460 1424,420 1440,350 1452,315 1466,290 1480,310 1494,350 1508,325 1525,300 1548,282"
};

function add(parent, tag, attrs) {
    const node = document.createElementNS(SVG_NS, tag);
    for (const key in attrs) {
        node.setAttribute(key, attrs[key]);
    }
    parent.appendChild(node);
    return node;
}

function parse(points) {
    return points.split(" ").map(p => p.split(",").map(Number));
}

function valueAt(points, x) {
    for (let i = 1; i < points.length; i++) {
        if (x <= points[i][0]) {
            const [x0, y0] = points[i - 1];
            const [x1, y1] = points[i];
            return y0 + (y1 - y0) * (x - x0) / (x1 - x0);
        }
    }
    return points[points.length - 1][1];
}

function wobble(i) {
    const v = Math.sin(i * 12.9898) * 43758.5453;
    return v - Math.floor(v);
}

function drawCandle(x, top, bottom, rising) {
    const group = document.getElementById("candles");
    add(group, "rect", { x: x - 2, y: top, width: 4, height: bottom - top, fill: rising ? RED : GREEN });
}

function drawCandles() {
    const line = parse(ma.m5);
    for (let x = 2; x < 960; x += STEP) {
        const open = valueAt(line, x + 6) + wobble(x) * 10 - 5;
        const close = valueAt(line, x + 12) + wobble(x + 1) * 10 - 5;
        const lead = (valueAt(line, x + 10) - valueAt(line, x - 4)) / 2;
        const top = Math.min(open, close) + lead - wobble(x + 2) * 6;
        const bottom = Math.min(668, Math.max(open, close) + lead + wobble(x + 3) * 6);
        drawCandle(x, Math.min(top, bottom - 4), bottom, close < open);
    }
    lastCandles.forEach(c => drawCandle(...c));
}

function drawMarker(n, x, y, color) {
    const group = document.getElementById("markers");
    const [fill, text] = markerColors[color];
    const left = x - 15;
    add(group, "rect", { x: left, y: y - 18, width: Math.min(30, 1056 - left), height: 36, rx: 5, fill: fill, "fill-opacity": 0.3 });
    add(group, "text", { x: x, y: y + 11, fill: text }).textContent = n;
}

function drawMarkers() {
    const line = parse(ma.m5);
    const tails = document.getElementById("tails");
    runs.forEach(([x0, y0, x1, y1, color, side]) => {
        for (let n = 1; n <= 9; n++) {
            const x = Math.round(x0 + (x1 - x0) * (n - 1) / 8);
            const y = y0 + (y1 - y0) * (n - 1) / 8;
            const edge = side === "below" ? y - 18 : y + 18;
            const gap = side === "below" ? 10 : -10;
            add(tails, "path", { d: `M${x} ${edge}V${valueAt(line, x + 4) + gap}` });
            drawMarker(n, x, y, n === 9 ? color : "orange");
        }
    });
    singles.forEach(([n, x, y, color]) => {
        add(tails, "path", { d: `M${x} ${y + 18}V${Math.max(y + 18, valueAt(line, x + 8) - 8)}` });
        drawMarker(n, x, y, color);
    });
}

function drawVolume() {
    const base = 246;
    const bars = document.getElementById("volumeBars");
    const lines = document.getElementById("volumeLines");
    const m5 = parse(volumeM5);
    for (let x = 2, i = 0; x < 1056; x += STEP, i++) {
        const rising = (x > 126 && x < 164) || (x > 495 && x < 526) || wobble(Math.floor(i / 3) + 5) > 0.45;
        const [h, up] = volumePeaks[x] || [valueAt(m5, x + 4) * (0.75 + wobble(i) * 0.3), rising];
        add(bars, "rect", { x: x - 2, y: base - h, width: up ? 4 : 3, height: h, fill: up ? RED : GREEN });
    }
    [[volumeM5, "#ffffff"], [volumeM10, "#f5ad1d"]].forEach(([points, stroke]) => {
        const flipped = parse(points).map(([x, h]) => `${x},${base - h}`).join(" ");
        add(lines, "polyline", { points: flipped, stroke: stroke });
    });
}

drawCandles();
drawMarkers();
for (const key of ["m5", "m10", "m20", "m30"]) {
    add(document.getElementById("maLines"), "polyline", { points: ma[key], stroke: maColors[key] });
}
drawVolume();
for (const stroke in kdj) {
    add(document.getElementById("kdjChart"), "polyline", { points: kdj[stroke], stroke: stroke });
}
```
